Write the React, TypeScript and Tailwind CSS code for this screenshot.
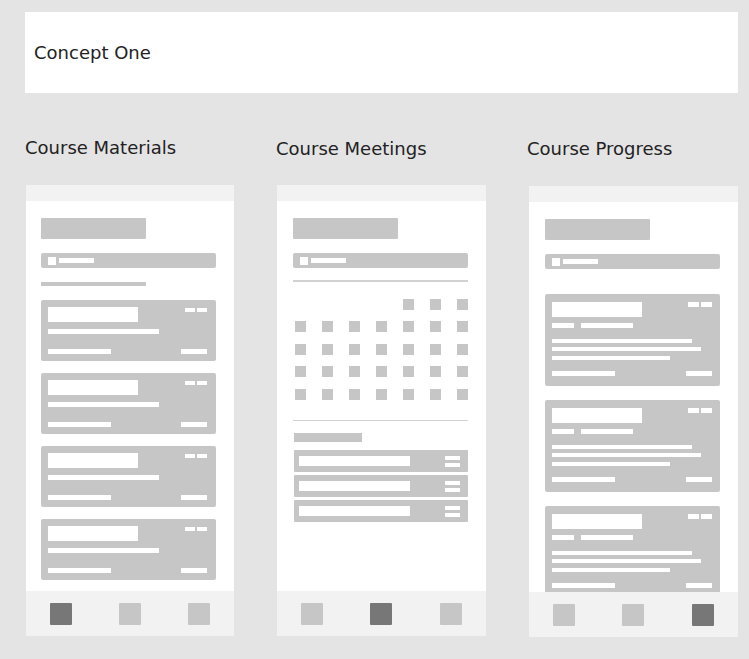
const font = { fontFamily: '"DejaVu Sans", Verdana, sans-serif' };

function TopBar() {
    return <div className="h-[16px] bg-[#f2f2f2] shrink-0" />;
}

function NavBar({ active }: { active: number }) {
    return (
        <div className="h-[45px] bg-[#f2f2f2] shrink-0 grid grid-cols-3 items-center justify-items-center pt-[1px]">
            {[0, 1, 2].map((i) => (
                <div
                    key={i}
                    className={`w-[22px] h-[22px] rounded-[1px] ${i === active ? 'bg-[#777777]' : 'bg-[#c6c6c6]'}`}
                />
            ))}
        </div>
    );
}

function Heading() {
    return (
        <>
            <div className="w-[105px] h-[21px] bg-[#c6c6c6] rounded-[1px]" />
            <div className="mt-[14px] h-[15px] bg-[#c6c6c6] rounded-[2px] flex items-center pl-[7px] gap-[3px]">
                <div className="w-[8px] h-[8px] bg-white" />
                <div className="w-[35px] h-[5px] bg-white" />
            </div>
        </>
    );
}

function MaterialCard() {
    return (
        <div className="h-[61px] bg-[#c6c6c6] rounded-[2px] px-[7px] pt-[7px] pr-[9px] flex flex-col">
            <div className="flex justify-between">
                <div className="w-[90px] h-[15px] bg-white" />
                <div className="flex gap-[2px] mt-[1px]">
                    <div className="w-[10px] h-[4px] bg-white" />
                    <div className="w-[10px] h-[4px] bg-white" />
                </div>
            </div>
            <div className="mt-[7px] w-[111px] h-[5px] bg-white" />
            <div className="mt-[15px] flex justify-between">
                <div className="w-[63px] h-[5px] bg-white" />
                <div className="w-[26px] h-[5px] bg-white" />
            </div>
        </div>
    );
}

function ProgressCard() {
    return (
        <div className="h-[92px] shrink-0 bg-[#c6c6c6] rounded-[2px] pl-[7px] pr-[8px] pt-[8px] flex flex-col">
            <div className="flex justify-between">
                <div className="w-[90px] h-[15px] bg-white" />
                <div className="flex gap-[2px]">
                    <div className="w-[11px] h-[5px] bg-white" />
                    <div className="w-[11px] h-[5px] bg-white" />
                </div>
            </div>
            <div className="mt-[6px] flex gap-[7px]">
                <div className="w-[22px] h-[5px] bg-white" />
                <div className="w-[52px] h-[5px] bg-white" />
            </div>
            <div className="mt-[11px] w-[140px] h-[4px] bg-white" />
            <div className="mt-[4px] w-[149px] h-[4px] bg-white" />
            <div className="mt-[5px] w-[118px] h-[4px] bg-white" />
            <div className="mt-[11px] flex justify-between">
                <div className="w-[63px] h-[5px] bg-white" />
                <div className="w-[26px] h-[5px] bg-white" />
            </div>
        </div>
    );
}

function Phone({ children, active, className = '' }: { children: React.ReactNode; active: number; className?: string }) {
    return (
        <div className={`h-[451px] bg-white flex flex-col ${className}`}>
            <TopBar />
            <div className="flex-1 overflow-hidden pl-[15px] pr-[18px] pt-[17px] flex flex-col">{children}</div>
            <NavBar active={active} />
        </div>
    );
}

function Calendar() {
    const rows = [
        [0, 0, 0, 0, 1, 1, 1],
        [1, 1, 1, 1, 1, 1, 1],
        [1, 1, 1, 1, 1, 1, 1],
        [1, 1, 1, 1, 1, 1, 1],
        [1, 1, 1, 1, 1, 1, 1],
    ];
    return (
        <div className="mt-[17px] flex flex-col gap-[11.5px] pl-[3px]">
            {rows.map((row, r) => (
                <div key={r} className="flex justify-between">
                    {row.map((on, c) => (
                        <div key={c} className={`w-[11px] h-[11px] ${on ? 'bg-[#c6c6c6]' : 'bg-transparent'}`} />
                    ))}
                </div>
            ))}
        </div>
    );
}

function MeetingItem() {
    return (
        <div className="h-[22px] bg-[#c6c6c6] rounded-[1px] flex items-center justify-between pl-[5px] pr-[8px]">
            <div className="w-[111px] h-[10px] bg-white" />
            <div className="flex flex-col gap-[3px]">
                <div className="w-[15px] h-[4px] bg-white" />
                <div className="w-[15px] h-[4px] bg-white" />
            </div>
        </div>
    );
}

export default function App() {
    return (
        <div className="w-[749px] h-[659px] bg-[#e4e4e4] pt-[12px] pl-[25px] pr-[11px]" style={font}>
            <div className="h-[81px] bg-white flex items-center pl-[9px]">
                <span className="text-[18px] text-[#222222]">Concept One</span>
            </div>

            <div className="mt-[45px] grid grid-cols-3 gap-x-[43px]">
                {/* Materials */}
                <div>
                    <div className="text-[18px] leading-[20px] text-[#222222]">Course Materials</div>
                    <Phone active={0} className="mt-[27px] ml-[1px]">
                        <Heading />
                        <div className="mt-[14px] w-[105px] h-[4px] bg-[#c6c6c6]" />
                        <div className="mt-[14px] flex flex-col gap-[12px]">
                            <MaterialCard />
                            <MaterialCard />
                            <MaterialCard />
                            <MaterialCard />
                        </div>
                    </Phone>
                </div>

                {/* Meetings */}
                <div>
                    <div className="text-[18px] leading-[20px] text-[#222222] mt-[1px] -ml-[1px]">Course Meetings</div>
                    <Phone active={1} className="mt-[26px]">
                        <div className="pl-[1px]">
                            <Heading />
                        </div>
                        <div className="mt-[12px] ml-[1px] h-[1.5px] bg-[#d2d2d2]" />
                        <Calendar />
                        <div className="mt-[20px] ml-[1px] h-[1.5px] bg-[#d2d2d2]" />
                        <div className="mt-[12px] ml-[2px] w-[68px] h-[9px] bg-[#c6c6c6]" />
                        <div className="mt-[8px] ml-[2px] flex flex-col gap-[3px]">
                            <MeetingItem />
                            <MeetingItem />
                            <MeetingItem />
                        </div>
                    </Phone>
                </div>

                {/* Progress */}
                <div>
                    <div className="text-[18px] leading-[20px] text-[#222222] mt-[1px] -ml-[2px]">Course Progress</div>
                    <Phone active={2} className="mt-[27px]">
                        <div className="pl-[1px]">
                            <Heading />
                        </div>
                        <div className="mt-[25px] ml-[1px] flex flex-col gap-[14px]">
                            <ProgressCard />
                            <ProgressCard />
                            <ProgressCard />
                        </div>
                    </Phone>
                </div>
            </div>
        </div>
    );
}
